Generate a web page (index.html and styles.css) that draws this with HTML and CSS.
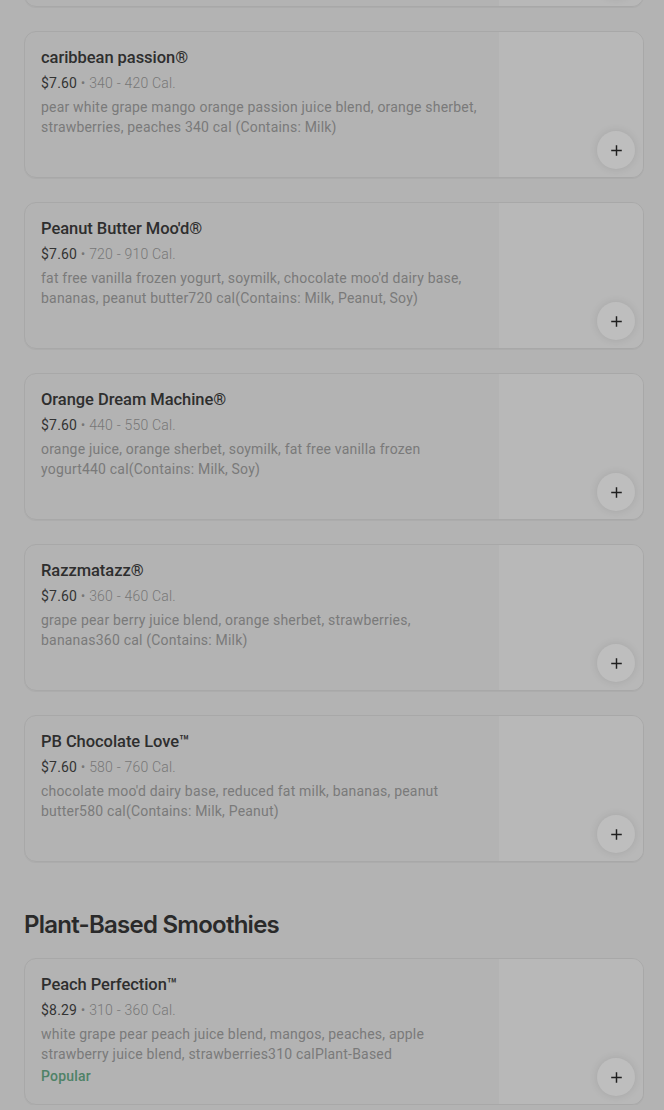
FILE: index.html
```html
<!DOCTYPE html>
<html lang="en">
<head>
<meta charset="utf-8">
<title>Menu</title>
<link rel="stylesheet" href="styles.css">
</head>
<body>
<main class="page">
  <section class="section">
    <div class="cards">
      <article class="card card-hidden" aria-hidden="true">
        <div class="card-body"></div>
        <div class="card-media"></div>
        <button class="add" aria-label="Add"><svg viewBox="0 0 16 16" width="13" height="13"><path d="M7.1 1.5h1.8v5.6h5.6v1.8H8.9v5.6H7.1V8.9H1.5V7.1h5.6z" fill="currentColor"/></svg></button>
      </article>
      <article class="card">
        <div class="card-body">
          <h3 class="item-name">caribbean passion®</h3>
          <p class="item-meta"><span class="price">$7.60</span> • 340 - 420 Cal.</p>
          <p class="item-desc">pear white grape mango orange passion juice blend, orange sherbet, strawberries, peaches 340 cal (Contains: Milk)</p>
        </div>
        <div class="card-media"></div>
        <button class="add" aria-label="Add"><svg viewBox="0 0 16 16" width="13" height="13"><path d="M7.1 1.5h1.8v5.6h5.6v1.8H8.9v5.6H7.1V8.9H1.5V7.1h5.6z" fill="currentColor"/></svg></button>
      </article>
      <article class="card">
        <div class="card-body">
          <h3 class="item-name">Peanut Butter Moo'd®</h3>
          <p class="item-meta"><span class="price">$7.60</span> • 720 - 910 Cal.</p>
          <p class="item-desc">fat free vanilla frozen yogurt, soymilk, chocolate moo'd dairy base, bananas, peanut butter720 cal(Contains: Milk, Peanut, Soy)</p>
        </div>
        <div class="card-media"></div>
        <button class="add" aria-label="Add"><svg viewBox="0 0 16 16" width="13" height="13"><path d="M7.1 1.5h1.8v5.6h5.6v1.8H8.9v5.6H7.1V8.9H1.5V7.1h5.6z" fill="currentColor"/></svg></button>
      </article>
      <article class="card">
        <div class="card-body">
          <h3 class="item-name">Orange Dream Machine®</h3>
          <p class="item-meta"><span class="price">$7.60</span> • 440 - 550 Cal.</p>
          <p class="item-desc">orange juice, orange sherbet, soymilk, fat free vanilla frozen yogurt440 cal(Contains: Milk, Soy)</p>
        </div>
        <div class="card-media"></div>
        <button class="add" aria-label="Add"><svg viewBox="0 0 16 16" width="13" height="13"><path d="M7.1 1.5h1.8v5.6h5.6v1.8H8.9v5.6H7.1V8.9H1.5V7.1h5.6z" fill="currentColor"/></svg></button>
      </article>
      <article class="card">
        <div class="card-body">
          <h3 class="item-name">Razzmatazz®</h3>
          <p class="item-meta"><span class="price">$7.60</span> • 360 - 460 Cal.</p>
          <p class="item-desc">grape pear berry juice blend, orange sherbet, strawberries, bananas360 cal (Contains: Milk)</p>
        </div>
        <div class="card-media"></div>
        <button class="add" aria-label="Add"><svg viewBox="0 0 16 16" width="13" height="13"><path d="M7.1 1.5h1.8v5.6h5.6v1.8H8.9v5.6H7.1V8.9H1.5V7.1h5.6z" fill="currentColor"/></svg></button>
      </article>
      <article class="card">
        <div class="card-body">
          <h3 class="item-name">PB Chocolate Love™</h3>
          <p class="item-meta"><span class="price">$7.60</span> • 580 - 760 Cal.</p>
          <p class="item-desc">chocolate moo'd dairy base, reduced fat milk, bananas, peanut butter580 cal(Contains: Milk, Peanut)</p>
        </div>
        <div class="card-media"></div>
        <button class="add" aria-label="Add"><svg viewBox="0 0 16 16" width="13" height="13"><path d="M7.1 1.5h1.8v5.6h5.6v1.8H8.9v5.6H7.1V8.9H1.5V7.1h5.6z" fill="currentColor"/></svg></button>
      </article>
    </div>
  </section>

  <section class="section">
    <h2 class="section-title">Plant-Based Smoothies</h2>
    <div class="cards">
      <article class="card">
        <div class="card-body">
          <h3 class="item-name">Peach Perfection™</h3>
          <p class="item-meta"><span class="price">$8.29</span> • 310 - 360 Cal.</p>
          <p class="item-desc">white grape pear peach juice blend, mangos, peaches, apple strawberry juice blend, strawberries310 calPlant-Based</p>
          <p class="item-tag">Popular</p>
        </div>
        <div class="card-media"></div>
        <button class="add" aria-label="Add"><svg viewBox="0 0 16 16" width="13" height="13"><path d="M7.1 1.5h1.8v5.6h5.6v1.8H8.9v5.6H7.1V8.9H1.5V7.1h5.6z" fill="currentColor"/></svg></button>
      </article>
    </div>
  </section>
</main>
</body>
</html>
```
FILE: styles.css
```css
* { box-sizing: border-box; }

html, body {
  margin: 0;
  padding: 0;
  background: #b3b3b3;
  overflow: hidden;
}

body {
  font-family: Roboto, "Liberation Sans", Arial, sans-serif;
  color: #2b2b2b;
}

.page {
  padding: 0 20px 0 24px;
}

.cards {
  display: flex;
  flex-direction: column;
  gap: 24px;
}

.card {
  position: relative;
  display: grid;
  grid-template-columns: 1fr 144px;
  min-height: 147px;
  border: 1px solid #a8a8a8;
  border-radius: 12px;
  overflow: hidden;
  box-shadow: 0 1px 0 rgba(0,0,0,0.04);
}

.card-hidden {
  margin-top: -140px;
}

.card-body {
  padding: 14px 16px 13px;
}

.card-media {
  background: #b8b8b8;
}

.item-name {
  margin: 0 0 3px;
  font-family: Roboto, sans-serif;
  font-size: 16.5px;
  line-height: 24px;
  font-weight: 500;
  color: #2e2e2e;
  letter-spacing: -0.05px;
}

.item-meta {
  margin: 0 0 4px;
  font-size: 14px;
  line-height: 20px;
  color: #777;
  font-weight: 300;
  letter-spacing: 0.2px;
}

.price {
  color: #333;
  font-weight: 400;
}

.item-desc {
  margin: 0;
  font-size: 14px;
  line-height: 20px;
  color: #7a7a7a;
  letter-spacing: 0.2px;
}

.item-tag {
  margin: 2px 0 0;
  font-size: 14px;
  line-height: 20px;
  font-weight: 500;
  color: #4f8267;
  letter-spacing: 0.2px;
}

.add {
  position: absolute;
  right: 8px;
  bottom: 8px;
  width: 38px;
  height: 38px;
  border-radius: 50%;
  border: none;
  background: #bebebe;
  color: #1f1f1f;
  display: flex;
  align-items: center;
  justify-content: center;
  padding: 0;
  box-shadow: 0 0 8px rgba(0,0,0,0.1);
}

.section-title {
  margin: 47px 0 17px;
  font-family: Inter, Roboto, sans-serif;
  font-size: 24px;
  line-height: 32px;
  font-weight: 600;
  letter-spacing: -0.75px;
  color: #2a2a2a;
}
```
